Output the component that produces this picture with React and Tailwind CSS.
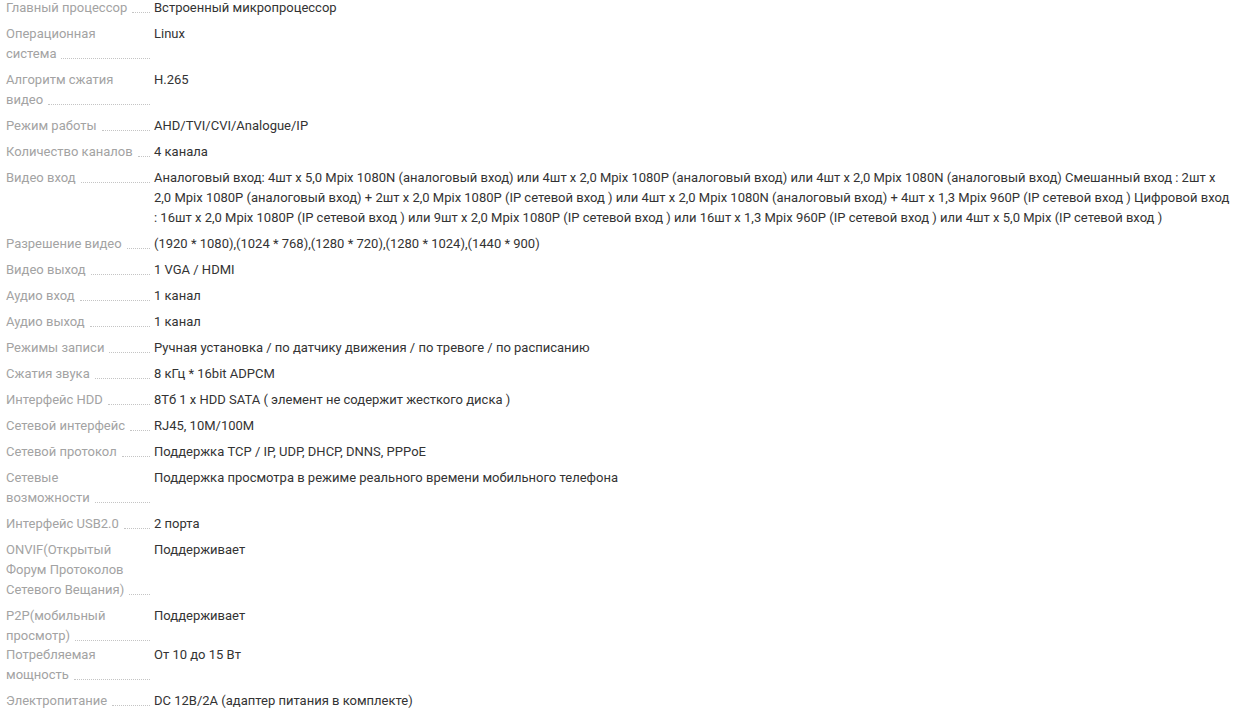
const specs = [
  { label: ['Главный процессор'], value: ['Встроенный микропроцессор'] },
  { label: ['Операционная', 'система'], value: ['Linux'] },
  { label: ['Алгоритм сжатия', 'видео'], value: ['H.265'] },
  { label: ['Режим работы'], value: ['AHD/TVI/CVI/Analogue/IP'] },
  { label: ['Количество каналов'], value: ['4 канала'] },
  {
    label: ['Видео вход'],
    value: [
      'Аналоговый вход: 4шт x 5,0 Mpix 1080N (аналоговый вход) или 4шт x 2,0 Mpix 1080P (аналоговый вход) или 4шт x 2,0 Mpix 1080N (аналоговый вход) Смешанный вход : 2шт x',
      '2,0 Mpix 1080P (аналоговый вход) + 2шт x 2,0 Mpix 1080P (IP сетевой вход ) или 4шт x 2,0 Mpix 1080N (аналоговый вход) + 4шт x 1,3 Mpix 960P (IP сетевой вход ) Цифровой вход',
      ': 16шт x 2,0 Mpix 1080P (IP сетевой вход ) или 9шт x 2,0 Mpix 1080P (IP сетевой вход ) или 16шт x 1,3 Mpix 960P (IP сетевой вход ) или 4шт x 5,0 Mpix (IP сетевой вход )',
    ],
  },
  { label: ['Разрешение видео'], value: ['(1920 * 1080),(1024 * 768),(1280 * 720),(1280 * 1024),(1440 * 900)'] },
  { label: ['Видео выход'], value: ['1 VGA / HDMI'] },
  { label: ['Аудио вход'], value: ['1 канал'] },
  { label: ['Аудио выход'], value: ['1 канал'] },
  { label: ['Режимы записи'], value: ['Ручная установка / по датчику движения / по тревоге / по расписанию'] },
  { label: ['Сжатия звука'], value: ['8 кГц * 16bit ADPCM'] },
  { label: ['Интерфейс HDD'], value: ['8Тб 1 x HDD SATA ( элемент не содержит жесткого диска )'] },
  { label: ['Сетевой интерфейс'], value: ['RJ45, 10M/100M'] },
  { label: ['Сетевой протокол'], value: ['Поддержка TCP / IP, UDP, DHCP, DNNS, PPPoE'] },
  { label: ['Сетевые', 'возможности'], value: ['Поддержка просмотра в режиме реального времени мобильного телефона'] },
  { label: ['Интерфейс USB2.0'], value: ['2 порта'] },
  { label: ['ONVIF(Открытый', 'Форум Протоколов', 'Сетевого Вещания)'], value: ['Поддерживает'] },
  { label: ['P2P(мобильный', 'просмотр)'], value: ['Поддерживает'] },
  { label: ['Потребляемая', 'мощность'], value: ['От 10 до 15 Вт'], tight: true },
  { label: ['Электропитание'], value: ['DC 12В/2А (адаптер питания в комплекте)'] },
]

function SpecRow({ label, value, tight }) {
  const first = label.slice(0, -1)
  const last = label[label.length - 1]
  return (
    <div className={`flex gap-[4px] py-[3px] ${tight ? '-mt-[7px]' : ''}`}>
      <div className="w-[144px] shrink-0 text-[#a3a3a3]">
        {first.map((line) => (
          <div key={line} className="whitespace-nowrap">{line}</div>
        ))}
        <div className="flex items-end gap-[5px]">
          <span className="whitespace-nowrap">{last}</span>
          <div className="flex-1 mb-[5px] border-b border-dotted border-[#c4c4c4]" />
        </div>
      </div>
      <div className="flex-1 min-w-0 text-[#333333]">
        {value.map((line) => (
          <div key={line} className="whitespace-nowrap">{line}</div>
        ))}
      </div>
    </div>
  )
}

export default function App() {
  return (
    <div className="min-h-screen bg-white">
      <div className="pl-[6px] -mt-[5px] text-[13px] leading-5 font-['Roboto',sans-serif]">
        {specs.map((row) => (
          <SpecRow key={row.label.join(' ')} {...row} />
        ))}
      </div>
    </div>
  )
}
